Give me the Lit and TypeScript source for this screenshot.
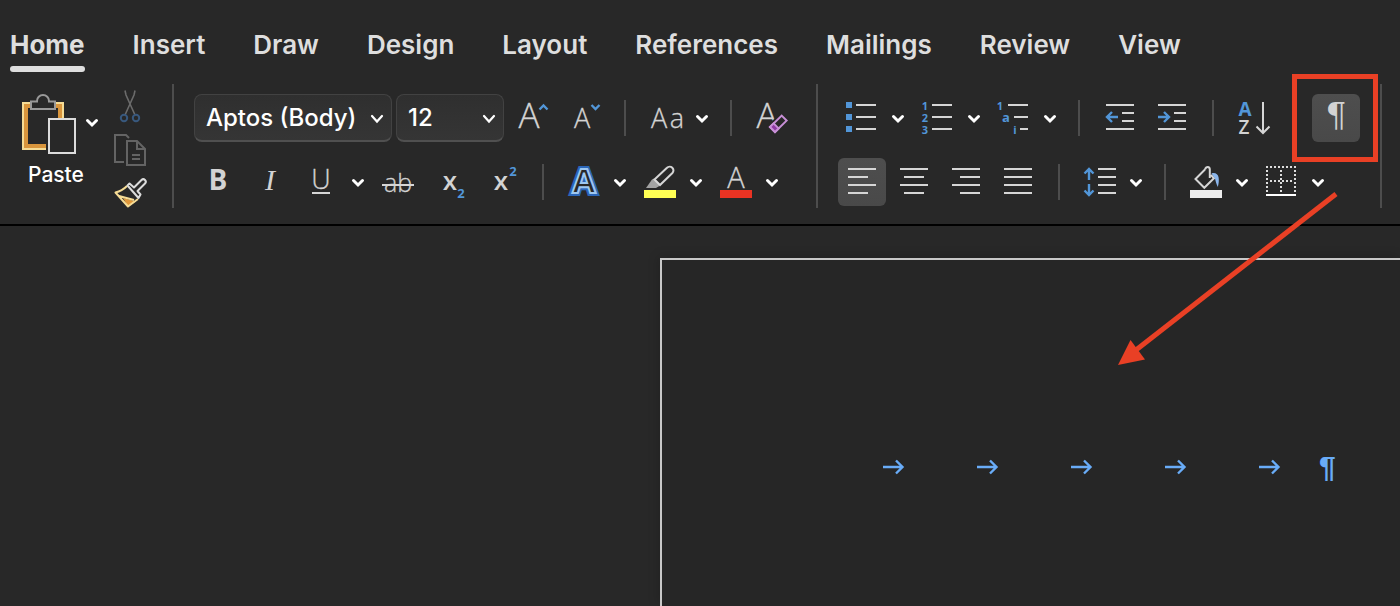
import { LitElement, html, svg, css, nothing } from "lit";
import { customElement, property } from "lit/decorators.js";

const dots = (() => {
  const out: unknown[] = [];
  for (let i = 8; i <= 36; i += 4) {
    out.push(svg`<rect x=${i} y="8" width="2" height="2"/>`);
    if (i > 8 && i < 36) out.push(svg`<rect x="8" y=${i} width="2" height="2"/><rect x="36" y=${i} width="2" height="2"/>`);
  }
  for (let i = 12; i <= 32; i += 4) {
    out.push(svg`<rect x=${i} y="22" width="2" height="2"/><rect x="22" y=${i} width="2" height="2"/>`);
  }
  return out;
})();

const icons: Record<string, unknown> = {
  grow: svg`<text class="light" x="21" y="34" font-size="35">A</text>
    <path class="blue" d="M31.500 15.500l4-4 4 4"/>`,
  shrink: svg`<text class="light" x="22" y="34" font-size="27">A</text>
    <path class="blue" d="M31.500 11l4 4 4-4"/>`,
  changeCase: svg`<text class="light" x="17" y="34" font-size="27">A</text>
    <text class="light" x="35" y="34" font-size="27">a</text>`,
  clear: svg`<text class="light" x="19" y="34" font-size="35">A</text>
    <path d="M33.700 18L42 26.500 27 42 18 32.500z" fill="#282828" stroke="none"/>
    <path d="M33.700 21.600L38.600 26.600 27 38 22 33z" stroke="#c78fd6"/>
    <path d="M25.600 29.400L30.600 34.400 27 38 22 33z" fill="#8e3aa3" stroke="#c78fd6"/>`,
  bold: svg`<text x="24" y="32" font-size="28" font-weight="700">B</text>`,
  italic: svg`<text class="serif" x="24" y="32" font-size="30" font-style="italic">I</text>`,
  underline: svg`<text class="light" x="23" y="31" font-size="27">U</text><path d="M14 35h18"/>`,
  strike: svg`<text class="light" x="24" y="34" font-size="25">ab</text><path d="M8 27h32"/>`,
  sub: svg`<text x="24" y="32" font-size="26" font-weight="600">x</text>
    <text class="bt" x="35" y="40" font-size="13">2</text>`,
  sup: svg`<text x="23" y="32" font-size="26" font-weight="600">x</text>
    <text class="bt" x="35" y="18" font-size="13">2</text>`,
  effects: svg`<text class="outer" x="24" y="35" font-size="34">A</text>
    <text class="inner" x="24" y="35" font-size="34">A</text>`,
  highlight: svg`<path d="M8 32h32v8H8z" fill="#ffff54" stroke="none"/>
    <path d="M10 30l6-8.500 2-1 6 6-1.500 2-2.500 1.500z" fill="#a3a3a3" stroke="none"/>
    <path d="M18.500 21.500L31 9.800a3.700 3.700 0 0 1 5.400 5.200L24 27z"/>`,
  fontColor: svg`<text class="light" x="24" y="30" font-size="29">A</text><path d="M8 32h32v8H8z" fill="#ea3323" stroke="none"/>`,
  bullets: svg`<path fill="#5296d8" stroke="none" d="M8 8h6v6H8zM8 20h6v6H8zM8 32h6v6H8z"/><path d="M18 11h20M18 23h20M18 35h20"/>`,
  numbers: svg`<text class="bt" x="11" y="16" font-size="11">1</text><text class="bt" x="11" y="28" font-size="11">2</text>
    <text class="bt" x="11" y="40" font-size="11">3</text><path d="M18 11h20M18 23h20M18 35h20"/>`,
  multilevel: svg`<text class="bt" x="10" y="16" font-size="11">1</text><text class="bt" x="16" y="28" font-size="13">a</text>
    <text class="bt" x="25" y="40" font-size="11">i</text><path d="M18 11h20M24 23h14M30 35h8"/>`,
  outdent: svg`<path d="M10 11h28M26 19h12M26 27h12M10 35h28"/><path class="blue" d="M22 23H11.500M16 18l-5 5 5 5"/>`,
  indent: svg`<path d="M10 11h28M26 19h12M26 27h12M10 35h28"/><path class="blue" d="M10 23h10.500M16 18l5 5-5 5"/>`,
  sort: svg`<text class="bt" x="15" y="22" font-size="19">A</text><text x="14" y="40" font-size="19" font-weight="600">Z</text>
    <path d="M33 8v30M26.500 32.500L33 39l6.500-6.500"/>`,
  marks: svg`<text class="dserif" x="24" y="33" font-size="33">¶</text>`,
  left: svg`<path d="M10 11h28M10 19h20M10 27h28M10 35h20"/>`,
  center: svg`<path d="M10 11h28M14 19h20M10 27h28M14 35h20"/>`,
  right: svg`<path d="M10 11h28M18 19h20M10 27h28M18 35h20"/>`,
  justify: svg`<path d="M10 11h28M10 19h28M10 27h28M10 35h28"/>`,
  spacing: svg`<path d="M22 11h18M22 19h18M22 27h18M22 35h18"/>
    <path class="blue" d="M13 22V12M8.500 15.500L13 11l4.500 4.500M13 26v10M8.500 32.500L13 37l4.500-4.500"/>`,
  shading: svg`<path d="M8 32h32v8H8z" fill="#ededed" stroke="none"/>
    <path d="M23 11.500L13.500 21l8.800 8.800 9.700-9.600-3-3.200M23 11.500c.5-1.600 1.500-2.500 2.800-2.500 1.400 0 2 1 2 2.500V20"/>
    <path d="M29.500 15.500c3.500-1.200 6.500.5 7.100 4 .5 3 .2 6-.8 9.500-1.500-3-2-5.500-2.800-8.500z" fill="#8bb6ec" stroke="none"/>`,
  borders: svg`<g fill="#ddd" stroke="none">${dots}</g><path d="M8 36h30v2H8z" fill="#fff" stroke="none"/>`,
};

const chevron = html`<svg viewBox="0 0 24 48" width="24" height="48" aria-hidden="true">
  <path d="M7.500 22.500L12 27l4.500-4.500" stroke="#fff" stroke-width="3" stroke-linecap="round"/></svg>`;

@customElement("ribbon-tool")
class RibbonTool extends LitElement {
  @property() icon = "";
  @property() label = "";
  @property({ type: Boolean }) menu = false;
  @property({ type: Boolean }) pressed = false;

  static styles = css`
    :host { display: flex; flex: none; }
    button {
      display: block; padding: 0; border: 0; border-radius: 6px;
      background: none; color: inherit; height: 48px;
    }
    .main { width: 48px; }
    .menu { width: 24px; }
    .on { background: linear-gradient(#4e4e4e, #494949); }
    svg { display: block; overflow: visible; fill: none; stroke: #d6d6d6; stroke-width: 2; }
    .blue { stroke: #5296d8; stroke-width: 2.4; }
    text { font-family: "Open Sans", "Noto Sans", sans-serif; fill: #d3d3d3; stroke: none; text-anchor: middle; }
    .light { font-weight: 300; stroke: #d3d3d3; stroke-width: 0.3; }
    .serif { font-family: "Liberation Serif", serif; }
    .dserif { font-family: "DejaVu Serif", serif; }
    .bt { fill: #5296d8; font-weight: 700; }
    .outer { font-weight: 700; fill: #2b66b8; stroke: #2b66b8; stroke-width: 6; stroke-miterlimit: 2; }
    .inner { font-weight: 700; fill: #282828; stroke: #9dc7f0; stroke-width: 2; stroke-miterlimit: 2; }
  `;

  render() {
    return html`
      <button class="main ${this.pressed ? "on" : ""}" aria-label=${this.label} aria-pressed=${this.pressed}>
        <svg viewBox="0 0 48 48" width="48" height="48" aria-hidden="true">${icons[this.icon]}</svg>
      </button>
      ${this.menu ? html`<button class="menu" aria-label="${this.label} options">${chevron}</button>` : nothing}
    `;
  }
}

type Tool = { icon: string; label: string; menu?: boolean; pressed?: boolean } | "|";

const fontTop: Tool[] = [
  { icon: "grow", label: "Increase Font Size" },
  { icon: "shrink", label: "Decrease Font Size" },
  "|",
  { icon: "changeCase", label: "Change Case", menu: true },
  "|",
  { icon: "clear", label: "Clear Formatting" },
];
const fontBottom: Tool[] = [
  { icon: "bold", label: "Bold" },
  { icon: "italic", label: "Italic" },
  { icon: "underline", label: "Underline", menu: true },
  { icon: "strike", label: "Strikethrough" },
  { icon: "sub", label: "Subscript" },
  { icon: "sup", label: "Superscript" },
  "|",
  { icon: "effects", label: "Text Effects", menu: true },
  { icon: "highlight", label: "Highlight Color", menu: true },
  { icon: "fontColor", label: "Font Color", menu: true },
];
const paraTop: Tool[] = [
  { icon: "bullets", label: "Bullets", menu: true },
  { icon: "numbers", label: "Numbering", menu: true },
  { icon: "multilevel", label: "Multilevel List", menu: true },
  "|",
  { icon: "outdent", label: "Decrease Indent" },
  { icon: "indent", label: "Increase Indent" },
  "|",
  { icon: "sort", label: "Sort" },
];
const paraBottom: Tool[] = [
  { icon: "left", label: "Align Left", pressed: true },
  { icon: "center", label: "Center" },
  { icon: "right", label: "Align Right" },
  { icon: "justify", label: "Justify" },
  "|",
  { icon: "spacing", label: "Line Spacing", menu: true },
  "|",
  { icon: "shading", label: "Shading", menu: true },
  { icon: "borders", label: "Borders", menu: true },
];

const tabs = ["Home", "Insert", "Draw", "Design", "Layout", "References", "Mailings", "Review", "View"];

@customElement("app-root")
class AppRoot extends LitElement {
  static styles = css`
    :host {
      display: flex; flex-direction: column; min-height: 100vh; overflow: hidden;
      background: #282828; color: #fff; font-family: Inter, sans-serif; box-sizing: border-box;
    }
    * { box-sizing: border-box; }
    .tabs { display: flex; gap: 48px; padding: 24px 10px 12px; }
    .tab {
      flex: none; height: 48px; color: #dedede; text-decoration: none;
      font-size: 26px; font-weight: 600; line-height: 42px;
    }
    .active { font-weight: 700; display: flex; flex-direction: column; }
    .active::after { content: ""; height: 6px; border-radius: 3px; background: #dedede; }
    .ribbon { display: flex; padding-bottom: 16px; border-bottom: 2px solid #000; }
    .group { display: flex; flex: none; padding: 0 20px; border-right: 2px solid #4d4d4d; height: 124px; }
    .stack { display: flex; flex-direction: column; gap: 16px; padding-top: 10px; }
    .row { display: flex; gap: 4px; align-items: center; height: 48px; }
    .sep { flex: none; width: 2px; height: 36px; margin: 0 12px; background: #4d4d4d; }
    .clip { display: flex; flex-direction: column; gap: 11px; padding: 6px 0 0 4px; }
    .plain { display: block; padding: 0; border: 0; background: none; color: inherit; font: inherit; text-align: left; }
    .small { width: 44px; height: 32px; }
    .small svg { display: block; margin: 0 auto; overflow: visible; }
    .paste { width: 84px; padding-top: 10px; align-self: flex-start; }
    .icons { display: flex; }
    .paste svg { display: block; }
    .name { display: block; padding-left: 8px; font-size: 21px; font-weight: 500; line-height: 42px; }
    .field { position: relative; display: flex; height: 48px; }
    .field select {
      appearance: none; width: 100%; height: 48px; padding: 0 32px 0 11px; color: #fff;
      font: 500 24px/46px Inter, sans-serif; background: linear-gradient(#2f2f2f, #353535);
      border: 1px solid #424242; border-bottom: 2px solid #505050; border-radius: 8px;
    }
    .field svg { position: absolute; right: 3px; top: 0; pointer-events: none; }
    .face { width: 198px; }
    .size { width: 108px; }
    .callout { position: relative; margin-left: auto; }
    .callout svg { position: absolute; right: -18px; top: -20px; pointer-events: none; z-index: 1; }
    .canvas { flex: 1; display: flex; padding-top: 32px; }
    .page {
      flex: 1; margin-left: calc(50% - 40px); padding: 185px 0 0 221px;
      border: solid #c8c8c8; border-width: 2px 0 0 2px; background: #262626;
      box-shadow: -2px -2px 10px rgba(0, 0, 0, 0.15);
    }
    .line { display: flex; align-items: center; margin: 0; height: 44px; color: #69acf8; }
    .mark { flex: none; width: 94px; }
    .last { width: 60px; }
    .mark svg { display: block; }
    .end { align-self: flex-start; font: 700 30px/44px "Liberation Sans", sans-serif; }
  `;

  private tools(list: Tool[]) {
    return list.map((t) =>
      t === "|"
        ? html`<span class="sep"></span>`
        : html`<ribbon-tool .icon=${t.icon} .label=${t.label} .menu=${!!t.menu} .pressed=${!!t.pressed}></ribbon-tool>`
    );
  }

  private select(cls: string, label: string, values: string[]) {
    return html`<label class="field ${cls}">
      <select aria-label=${label}>${values.map((v) => html`<option>${v}</option>`)}</select>
      <svg viewBox="0 0 24 48" width="24" height="48" aria-hidden="true">
        <path d="M7 22l5 5.500 5-5.500" fill="none" stroke="#fff" stroke-width="2.200" stroke-linecap="round"/>
      </svg>
    </label>`;
  }

  render() {
    return html`
      <nav class="tabs" aria-label="Ribbon tabs">
        ${tabs.map((t, i) => html`<a href="#" class="tab ${i === 0 ? "active" : ""}">${t}</a>`)}
      </nav>
      <div class="ribbon">
        <section class="group" aria-label="Clipboard">
          <button class="plain paste">
            <span class="icons">
              <svg viewBox="0 0 60 60" width="60" height="60" aria-hidden="true">
                <path d="M10 11H5v42h21" fill="none" stroke="#d9953c" stroke-width="6"/>
                <path d="M36 11h5v13" fill="none" stroke="#d9953c" stroke-width="6"/>
                <path d="M10 9H3v46h23M36 9h7v15" fill="none" stroke="#f6dc95" stroke-width="2"/>
                <path d="M11 15V7.500h6V7a6 6 0 0 1 12 0v.5h6V15z" fill="#282828" stroke="#999" stroke-width="2"/>
                <path d="M29 25h26v34H29z" fill="#282828" stroke="#dcdcdc" stroke-width="2"/>
              </svg>
              <svg viewBox="0 0 24 60" width="24" height="60" aria-hidden="true">
                <path d="M7.500 26.500L12 31l4.500-4.500" fill="none" stroke="#fff" stroke-width="3" stroke-linecap="round"/>
              </svg>
            </span>
            <span class="name">Paste</span>
          </button>
          <div class="clip">
            <button class="plain small" aria-label="Cut">
              <svg viewBox="0 0 32 32" width="32" height="32" fill="none" stroke-width="1.600" aria-hidden="true">
                <path d="M11 .5L12 5l9 20M21 .5L20 5l-9 20" stroke="#6b6b6b"/>
                <circle cx="10" cy="28" r="3.200" stroke="#38587d" stroke-width="2"/>
                <circle cx="22" cy="28" r="3.200" stroke="#38587d" stroke-width="2"/>
              </svg>
            </button>
            <button class="plain small" aria-label="Copy">
              <svg viewBox="0 0 32 32" width="32" height="32" fill="none" stroke="#646464" stroke-width="2" aria-hidden="true">
                <path d="M10 29H1V2h11l3 3M13 8h10l8 8v16H13zM23 8v8h8M18 22h8M18 26h8"/>
              </svg>
            </button>
            <button class="plain small" aria-label="Format Painter">
              <svg viewBox="0 0 32 32" width="32" height="32" fill="none" stroke-width="2" stroke-linejoin="round" aria-hidden="true">
                <path d="M9 22l13 3.500-8 5z" fill="#e0983b"/>
                <path d="M13 10Q8 15 1.500 16.500L14 30.500l10-7.500M5 20l15 4" stroke="#f6dc95"/>
                <path d="M13.500 9.500l2-2 4.500 4 7.500-7.500a2.400 2.400 0 0 1 3.500 3.500L23.500 15l3 3.500-2 3.500z" fill="#282828" stroke="#dcdcdc"/>
              </svg>
            </button>
          </div>
        </section>
        <section class="group" aria-label="Font">
          <div class="stack">
            <div class="row">
              ${this.select("face", "Font", ["Aptos (Body)"])}
              ${this.select("size", "Font Size", ["12"])}
              ${this.tools(fontTop)}
            </div>
            <div class="row">${this.tools(fontBottom)}</div>
          </div>
        </section>
        <section class="group" aria-label="Paragraph">
          <div class="stack">
            <div class="row">
              ${this.tools([...paraTop, "|"])}
              <div class="callout">
                <ribbon-tool icon="marks" label="Show Formatting Marks" pressed></ribbon-tool>
                <svg viewBox="1110 74 268 300" width="268" height="300" aria-hidden="true">
                  <rect x="1294.500" y="76.500" width="81" height="83" fill="none" stroke="#e94025" stroke-width="5"/>
                  <path d="M1336 194L1136 350" stroke="#e94025" stroke-width="5"/>
                  <path d="M1118 365l12.500-25 14.500 19.500z" fill="#e94025"/>
                </svg>
              </div>
            </div>
            <div class="row">${this.tools(paraBottom)}</div>
          </div>
        </section>
      </div>
      <main class="canvas">
        <article class="page">
          <p class="line">
            ${[0, 1, 2, 3, 4].map((i) => html`<span class="mark ${i === 4 ? "last" : ""}">
              <svg viewBox="0 0 22 22" width="22" height="22" role="img" aria-label="Tab">
                <path d="M0 11h19M13 4.500l6.500 6.500-6.500 6.500" fill="none" stroke="#69acf8" stroke-width="2.400"/>
              </svg></span>`)}
            <span class="end">¶</span>
          </p>
        </article>
      </main>
    `;
  }
}
